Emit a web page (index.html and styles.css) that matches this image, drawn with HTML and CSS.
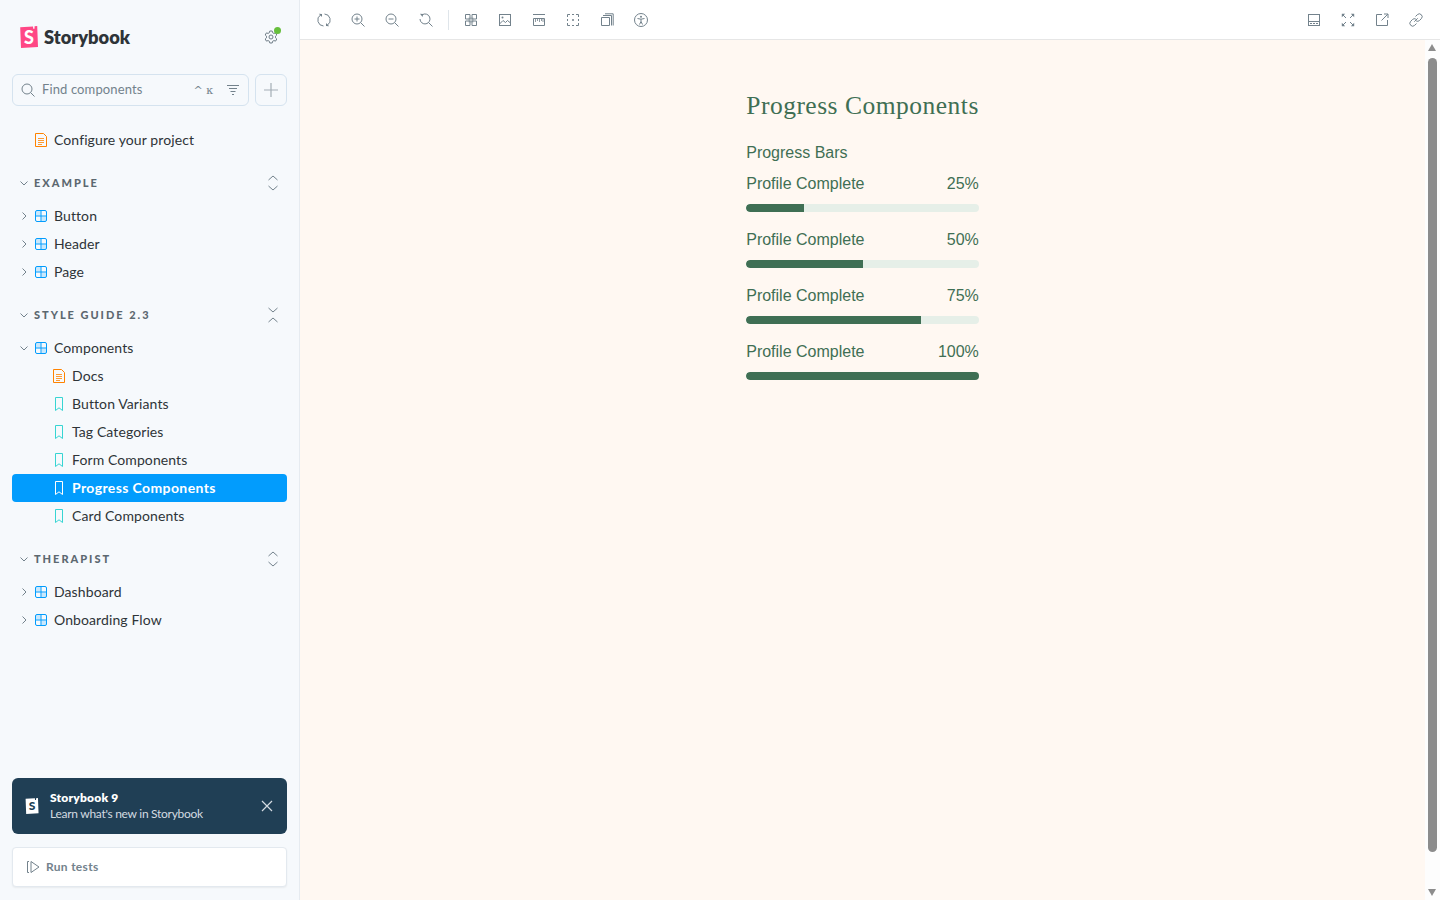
FILE: index.html
```html
<!DOCTYPE html>
<html lang="en">
<head>
<meta charset="utf-8">
<title>Progress Components</title>
<link rel="stylesheet" href="styles.css">
</head>
<body>
<svg class="defs" aria-hidden="true">
  <symbol id="i-comp" viewBox="0 0 12 12"><rect x=".5" y=".5" width="11" height="11" rx="1.5" fill="none" stroke="currentColor"/><path d="M6 .5v11M.5 6h11" stroke="currentColor" fill="none"/><path d="M1 1h4.500v4.500H1zM6.500 6.500H11V11H6.500z" fill="currentColor" opacity=".18"/></symbol>
  <symbol id="i-doc" viewBox="0 0 12 14"><path d="M.5.500h8l3 3v10H.5z" fill="none" stroke="currentColor"/><path d="M3 5.500h6M3 7.500h6M3 9.500h6M3 11.500h4" stroke="currentColor" fill="none" stroke-width=".8"/></symbol>
  <symbol id="i-story" viewBox="0 0 8 14"><path d="M.5.500h7v13L4 10.800.5 13.500z" fill="none" stroke="currentColor"/></symbol>
  <symbol id="i-right" viewBox="0 0 10 10"><path d="M3.500 1.500 7 5 3.500 8.500" fill="none" stroke="currentColor"/></symbol>
  <symbol id="i-down" viewBox="0 0 10 10"><path d="M1.500 3.500 5 7l3.500-3.500" fill="none" stroke="currentColor"/></symbol>
  <symbol id="i-expand" viewBox="0 0 12 16"><path d="M1.500 5 6 1l4.500 4M1.500 11 6 15l4.500-4" fill="none" stroke="currentColor"/></symbol>
  <symbol id="i-collapse" viewBox="0 0 12 16"><path d="M1.500 1 6 5l4.500-4M1.500 15 6 11l4.500 4" fill="none" stroke="currentColor"/></symbol>
  <symbol id="i-sync" viewBox="0 0 14 14"><path d="M7.500 1A6 6 0 0 1 10.500 12M6.500 13A6 6 0 0 1 3.500 2" fill="none" stroke="currentColor"/><path d="M1.800.8 5 1v3zM12.200 13.200 9 13v-3z" fill="currentColor"/></symbol>
  <symbol id="i-zin" viewBox="0 0 14 14"><circle cx="6" cy="6" r="5" fill="none" stroke="currentColor"/><path d="m9.700 9.700 3.800 3.800M3.500 6h5M6 3.500v5" fill="none" stroke="currentColor"/></symbol>
  <symbol id="i-zout" viewBox="0 0 14 14"><circle cx="6" cy="6" r="5" fill="none" stroke="currentColor"/><path d="m9.700 9.700 3.800 3.800M3.500 6h5" fill="none" stroke="currentColor"/></symbol>
  <symbol id="i-zreset" viewBox="0 0 14 14"><path d="M3.200 1.800A5 5 0 1 1 1 6M9.700 9.700l3.800 3.800" fill="none" stroke="currentColor"/><path d="M1 .8 4.300 1 3.500 4z" fill="currentColor"/></symbol>
  <symbol id="i-grid" viewBox="0 0 14 14"><path d="M1.500 1.500h4.500v4.500h-4.500zM8 1.500h4.500v4.500H8zM1.500 8h4.500v4.500h-4.500zM8 8h4.500v4.500H8z" fill="none" stroke="currentColor"/><path d="M4.500 4.500h5v5h-5z" fill="currentColor" opacity=".45"/></symbol>
  <symbol id="i-photo" viewBox="0 0 14 14"><rect x="1.500" y="1.500" width="11" height="11" fill="none" stroke="currentColor"/><path d="m1.500 11 3.500-3.500 2.500 2 2-2 3 2.500" fill="none" stroke="currentColor"/><circle cx="4.500" cy="4.500" r="1" fill="currentColor"/></symbol>
  <symbol id="i-ruler" viewBox="0 0 14 14"><path d="M1 1.500h12M1.500 5.500h11v7h-11z" fill="none" stroke="currentColor"/><path d="M3.500 6v3M5.500 6v2M7.500 6v3M9.500 6v2M11 6v3" fill="none" stroke="currentColor" stroke-width=".8"/></symbol>
  <symbol id="i-outline" viewBox="0 0 14 14"><path d="M1.500 4V1.500H4M6 1.500h2M10 1.500h2.500V4M12.500 6v2M12.500 10v2.500H10M8 12.500H6M4 12.500H1.500V10M1.500 8V6" fill="none" stroke="currentColor"/><circle cx="7" cy="7" r="1" fill="currentColor"/></symbol>
  <symbol id="i-measure" viewBox="0 0 14 14"><path d="M1.500 4.500h8v8h-8zM3 2.500h8.500V12.500M5 .8h8.200V12.500" fill="none" stroke="currentColor"/></symbol>
  <symbol id="i-a11y" viewBox="0 0 14 14"><circle cx="7" cy="7" r="6.500" fill="none" stroke="currentColor"/><circle cx="7" cy="3.800" r="1" fill="currentColor"/><path d="M3.500 5.500 7 6.200l3.500-.7M7 6.200v2.300M7 8.500l-1.500 3M7 8.500l1.500 3" fill="none" stroke="currentColor"/></symbol>
  <symbol id="i-panel" viewBox="0 0 14 14"><rect x="1.500" y="1.500" width="11" height="11" fill="none" stroke="currentColor"/><path d="M1.500 8.500h11" stroke="currentColor"/><path d="M3 10.500h2M6 10.500h2M9 10.500h2" stroke="currentColor"/></symbol>
  <symbol id="i-full" viewBox="0 0 14 14"><path d="M1 1l4 4M13 1 9 5M1 13l4-4M13 13 9 9" fill="none" stroke="currentColor"/><path d="M.8.800h3.400L.8 4.200zM13.200.800H9.800l3.400 3.400zM.8 13.200h3.400L.8 9.800zM13.200 13.200H9.800l3.400-3.400z" fill="currentColor"/></symbol>
  <symbol id="i-share" viewBox="0 0 14 14"><path d="M12.500 7v5.500h-11v-11H7M6.500 7.500 12.800 1.200M9 1h4v4" fill="none" stroke="currentColor"/></symbol>
  <symbol id="i-link" viewBox="0 0 14 14"><path d="M5.300 8.700 8.700 5.300M6.500 3.500 8.300 1.700a2.800 2.800 0 0 1 4 4L10.500 7.500a2.800 2.800 0 0 1-3.400.4M7.500 10.500 5.700 12.300a2.800 2.800 0 0 1-4-4L3.500 6.500a2.800 2.800 0 0 1 3.400-.4" fill="none" stroke="currentColor"/></symbol>
  <symbol id="i-logo" viewBox="0 0 18 22"><path d="M.2 1.200 13 .4l.2 2.400 1.300-.1.100-2.400L17.200.1 18 21 1 22z" fill="currentColor"/></symbol>
</svg>

<div class="app">
  <aside class="sidebar">
    <header class="brand">
      <div class="logo">
        <span class="logo-mark"><svg class="logo-svg"><use href="#i-logo"/></svg><span class="logo-s">S</span></span>
        <span class="logo-text">Storybook</span>
      </div>
      <span class="gear">
        <svg class="gear-svg" viewBox="0 0 14 14"><path d="M5.800 1h2.400l.4 1.700 1.300.7 1.700-.5 1.200 2.100-1.300 1.200v1.600l1.300 1.200-1.200 2.100-1.700-.5-1.300.7-.4 1.700H5.800l-.4-1.700-1.300-.7-1.700.5-1.200-2.100 1.300-1.200V6.200L1.200 5l1.200-2.100 1.700.5 1.300-.7z" fill="none" stroke="currentColor"/><circle cx="7" cy="7" r="2" fill="none" stroke="currentColor"/></svg>
        <i class="gear-dot"></i>
      </span>
    </header>

    <div class="search-row">
      <div class="search">
        <svg class="ic-14 search-ic" viewBox="0 0 14 14"><circle cx="6" cy="6" r="5" fill="none" stroke="currentColor"/><path d="m9.700 9.700 3.800 3.800" stroke="currentColor" fill="none"/></svg>
        <span class="search-text">Find components</span>
        <span class="kbd">^ ĸ</span>
        <svg class="ic-14 filter-ic" viewBox="0 0 14 14"><path d="M1 2.500h12M3 5.500h8M4.500 8.500h5M6 11.500h2" stroke="currentColor" fill="none"/></svg>
      </div>
      <button class="add" type="button"><svg class="ic-14" viewBox="0 0 14 14"><path d="M7 0v14M0 7h14" stroke="currentColor" stroke-width="1.200" fill="none"/></svg></button>
    </div>

    <nav class="tree">
      <a class="row l0"><svg class="ic-doc"><use href="#i-doc"/></svg>Configure your project</a>

      <div class="section"><svg class="chev"><use href="#i-down"/></svg><span class="section-name">EXAMPLE</span><svg class="sec-ic"><use href="#i-expand"/></svg></div>
      <a class="row l0"><svg class="chev"><use href="#i-right"/></svg><svg class="ic-comp"><use href="#i-comp"/></svg>Button</a>
      <a class="row l0"><svg class="chev"><use href="#i-right"/></svg><svg class="ic-comp"><use href="#i-comp"/></svg>Header</a>
      <a class="row l0"><svg class="chev"><use href="#i-right"/></svg><svg class="ic-comp"><use href="#i-comp"/></svg>Page</a>

      <div class="section"><svg class="chev"><use href="#i-down"/></svg><span class="section-name">STYLE GUIDE 2.3</span><svg class="sec-ic"><use href="#i-collapse"/></svg></div>
      <a class="row l0"><svg class="chev"><use href="#i-down"/></svg><svg class="ic-comp"><use href="#i-comp"/></svg>Components</a>
      <a class="row l1"><svg class="ic-doc"><use href="#i-doc"/></svg>Docs</a>
      <a class="row l1"><svg class="ic-story"><use href="#i-story"/></svg>Button Variants</a>
      <a class="row l1"><svg class="ic-story"><use href="#i-story"/></svg>Tag Categories</a>
      <a class="row l1"><svg class="ic-story"><use href="#i-story"/></svg>Form Components</a>
      <a class="row l1 active"><svg class="ic-story"><use href="#i-story"/></svg>Progress Components</a>
      <a class="row l1"><svg class="ic-story"><use href="#i-story"/></svg>Card Components</a>

      <div class="section"><svg class="chev"><use href="#i-down"/></svg><span class="section-name">THERAPIST</span><svg class="sec-ic"><use href="#i-expand"/></svg></div>
      <a class="row l0"><svg class="chev"><use href="#i-right"/></svg><svg class="ic-comp"><use href="#i-comp"/></svg>Dashboard</a>
      <a class="row l0"><svg class="chev"><use href="#i-right"/></svg><svg class="ic-comp"><use href="#i-comp"/></svg>Onboarding Flow</a>
    </nav>

    <div class="notice">
      <span class="notice-logo"><svg class="notice-svg"><use href="#i-logo"/></svg><span class="notice-s">S</span></span>
      <div class="notice-body">
        <div class="notice-title">Storybook 9</div>
        <div class="notice-sub">Learn what's new in Storybook</div>
      </div>
      <svg class="ic-14 notice-x" viewBox="0 0 14 14"><path d="m2 2 10 10M12 2 2 12" stroke="currentColor" stroke-width="1.200" fill="none"/></svg>
    </div>

    <div class="run">
      <svg class="ic-14 run-ic" viewBox="0 0 14 14"><path d="M3 1.500H1.500v11H3M5 1.500v11l8-5.500z" fill="none" stroke="currentColor"/></svg>
      <span>Run tests</span>
    </div>
  </aside>

  <main class="main">
    <div class="toolbar">
      <div class="tools">
        <span class="tool"><svg class="ic-14"><use href="#i-sync"/></svg></span>
        <span class="tool"><svg class="ic-14"><use href="#i-zin"/></svg></span>
        <span class="tool"><svg class="ic-14"><use href="#i-zout"/></svg></span>
        <span class="tool"><svg class="ic-14"><use href="#i-zreset"/></svg></span>
        <span class="sep"></span>
        <span class="tool"><svg class="ic-14"><use href="#i-grid"/></svg></span>
        <span class="tool"><svg class="ic-14"><use href="#i-photo"/></svg></span>
        <span class="tool"><svg class="ic-14"><use href="#i-ruler"/></svg></span>
        <span class="tool"><svg class="ic-14"><use href="#i-outline"/></svg></span>
        <span class="tool"><svg class="ic-14"><use href="#i-measure"/></svg></span>
        <span class="tool"><svg class="ic-14"><use href="#i-a11y"/></svg></span>
      </div>
      <div class="tools">
        <span class="tool"><svg class="ic-14"><use href="#i-panel"/></svg></span>
        <span class="tool"><svg class="ic-14"><use href="#i-full"/></svg></span>
        <span class="tool"><svg class="ic-14"><use href="#i-share"/></svg></span>
        <span class="tool"><svg class="ic-14"><use href="#i-link"/></svg></span>
      </div>
    </div>

    <div class="stage">
      <div class="canvas">
        <section class="demo">
          <h1 class="demo-title">Progress Components</h1>
          <h2 class="demo-sub">Progress Bars</h2>
          <div class="bar-item">
            <div class="bar-head"><span>Profile Complete</span><span>25%</span></div>
            <div class="track"><div class="fill" style="width:25%"></div></div>
          </div>
          <div class="bar-item">
            <div class="bar-head"><span>Profile Complete</span><span>50%</span></div>
            <div class="track"><div class="fill" style="width:50%"></div></div>
          </div>
          <div class="bar-item">
            <div class="bar-head"><span>Profile Complete</span><span>75%</span></div>
            <div class="track"><div class="fill" style="width:75%"></div></div>
          </div>
          <div class="bar-item">
            <div class="bar-head"><span>Profile Complete</span><span>100%</span></div>
            <div class="track"><div class="fill" style="width:100%"></div></div>
          </div>
        </section>
      </div>
      <div class="scrollbar">
        <i class="arrow-up"></i>
        <i class="thumb"></i>
        <i class="arrow-down"></i>
      </div>
    </div>
  </main>
</div>
</body>
</html>
```

FILE: styles.css
```css
* { box-sizing: border-box; }
html, body { margin: 0; height: 100%; overflow: hidden; }
body { font-family: "Lato", "Open Sans", sans-serif; color: #2e3438; background: #fff; }
.defs { display: none; }
a { color: inherit; text-decoration: none; }
svg { display: block; flex: none; }
.ic-14 { width: 14px; height: 14px; }

.app { display: flex; height: 900px; }

/* sidebar */
.sidebar {
  width: 300px; flex: none; display: flex; flex-direction: column;
  padding: 0 12px; background: #f6f9fc; border-right: 1px solid #e6ebf0;
}
.brand { display: flex; align-items: center; justify-content: space-between; height: 74px; padding: 0 9px 0 8px; }
.logo { display: flex; align-items: center; gap: 6px; }
.logo-mark { position: relative; width: 18px; height: 22px; display: block; color: #ff4785; }
.logo-svg { width: 18px; height: 22px; }
.logo-s { position: absolute; inset: 0; text-align: center; font: 900 18px/22px "Lato", sans-serif; color: #fff; }
.logo-text { font: 800 18.300px/24px "Lato", sans-serif; color: #2e3438; }
.gear { position: relative; display: block; color: #6f7d87; }
.gear-svg { width: 14px; height: 14px; }
.gear-dot { position: absolute; top: -3px; right: -3px; width: 7px; height: 7px; border-radius: 50%; background: #66bf3c; }

.search-row { display: flex; gap: 6px; height: 32px; }
.search {
  flex: 1; display: flex; align-items: center; padding: 0 8px;
  border: 1px solid #d5e3ef; border-radius: 6px; color: #73828c;
}
.search-ic { margin-right: 7px; }
.search-text { flex: 1; font-size: 13px; letter-spacing: .12px; padding-bottom: 2px; }
.kbd { font: 11px/1 "DejaVu Serif", serif; margin-right: 13px; color: #73828c; white-space: pre; }
.add {
  width: 32px; padding: 0; display: flex; align-items: center; justify-content: center;
  background: transparent; border: 1px solid #d5e3ef; border-radius: 6px; color: #a3adb5;
}

.tree { display: flex; flex-direction: column; padding-top: 20px; flex: 1; }
.row { display: flex; align-items: center; height: 28px; padding-bottom: 2px; font-size: 14px; letter-spacing: .1px; color: #2e3438; border-radius: 4px; }
.l0 { padding-left: 7px; }
.l0 > .ic-doc { margin-left: 16px; }
.l1 { padding-left: 41px; }
.chev { width: 10px; height: 10px; margin: 2px 6px 0 0; color: #73828c; }
.ic-comp { width: 12px; height: 12px; margin: 2px 7px 0 0; color: #029cfd; }
.ic-doc { width: 12px; height: 14px; margin: 2px 7px 0 0; color: #ff8300; }
.ic-story { width: 8px; height: 14px; margin: 2px 9px 0 2px; color: #37d5d3; }
.active { background: #029cfd; color: #fff; font-weight: 700; letter-spacing: .38px; }
.active .ic-story { color: #fff; }
.section { display: flex; align-items: center; height: 28px; margin: 15px 0 5px; padding: 0 8px 2px 7px; color: #5c6870; }
.section > .chev { margin-right: 5px; }
.section-name { flex: 1; font-size: 11px; font-weight: 900; letter-spacing: .18em; }
.sec-ic { width: 12px; height: 16px; margin-top: 2px; color: #73828c; }

.notice {
  height: 56px; display: flex; align-items: center; padding: 0 13px 0 13px;
  border-radius: 6px; background: #203f55; color: #fff;
}
.notice-logo { position: relative; width: 14px; height: 16px; margin-right: 11px; color: #fff; }
.notice-svg { width: 14px; height: 16px; }
.notice-s { position: absolute; inset: 0; text-align: center; font: 900 12px/16px "Lato", sans-serif; color: #203f55; }
.notice-body { flex: 1; font-size: 12px; line-height: 16px; }
.notice-title { font-weight: 800; letter-spacing: .2px; }
.notice-sub { color: #d3dbe1; letter-spacing: -.28px; }
.notice-x { color: #d5dce2; }

.run {
  height: 40px; margin: 13px 0; padding: 0 0 2px 13px; display: flex; align-items: center; gap: 6px;
  background: #fff; border: 1px solid #e3e9ef; border-radius: 4px;
  box-shadow: 0 1px 2px rgba(0, 0, 0, .06);
  font-size: 12px; font-weight: 700; letter-spacing: .3px; color: #73828c;
}
.run-ic { margin-top: 2px; }

/* main */
.main { flex: 1; display: flex; flex-direction: column; min-width: 0; }
.toolbar {
  height: 40px; flex: none; display: flex; align-items: center; justify-content: space-between;
  padding: 0 10px; background: #fff; border-bottom: 1px solid #e6e6e6;
}
.tools { display: flex; align-items: center; gap: 6px; }
.tool { width: 28px; height: 28px; display: flex; align-items: center; justify-content: center; color: #73828c; }
.sep { width: 1px; height: 20px; margin: 0 2px; background: #dfe5ea; }

.stage { flex: 1; display: flex; min-height: 0; }
.canvas { flex: 1; background: #fff8f2; padding-top: 48px; min-width: 0; }
.demo { width: 232.600px; margin: 0 auto; color: #3f6f54; font-family: "Liberation Sans", Arial, sans-serif; }
.demo-title { margin: 0 0 17px; font: 400 25.500px/36px "Liberation Serif", serif; letter-spacing: .5px; white-space: nowrap; }
.demo-sub { margin: 0; font-size: 16px; font-weight: 400; line-height: 24px; }
.bar-item { margin-top: 7px; margin-bottom: 16px; }
.bar-item + .bar-item { margin-top: 0; }
.bar-head { display: flex; justify-content: space-between; font-size: 16px; line-height: 24px; margin-bottom: 8px; }
.track { height: 8px; border-radius: 4px; background: #e6efe8; overflow: hidden; }
.fill { height: 100%; background: #3f6f54; border-radius: 4px 0 0 4px; }

.scrollbar { width: 15px; flex: none; background: #fdfdfd; position: relative; }
.thumb { position: absolute; left: 3px; top: 18px; width: 9px; height: 794px; border-radius: 5px; background: #8c8c8c; }
.arrow-up, .arrow-down { position: absolute; left: 3px; width: 0; height: 0; border: 4.500px solid transparent; }
.arrow-up { top: 4px; border-top-width: 0; border-bottom: 7px solid #8c8c8c; }
.arrow-down { bottom: 4px; border-bottom-width: 0; border-top: 7px solid #8c8c8c; }
```
